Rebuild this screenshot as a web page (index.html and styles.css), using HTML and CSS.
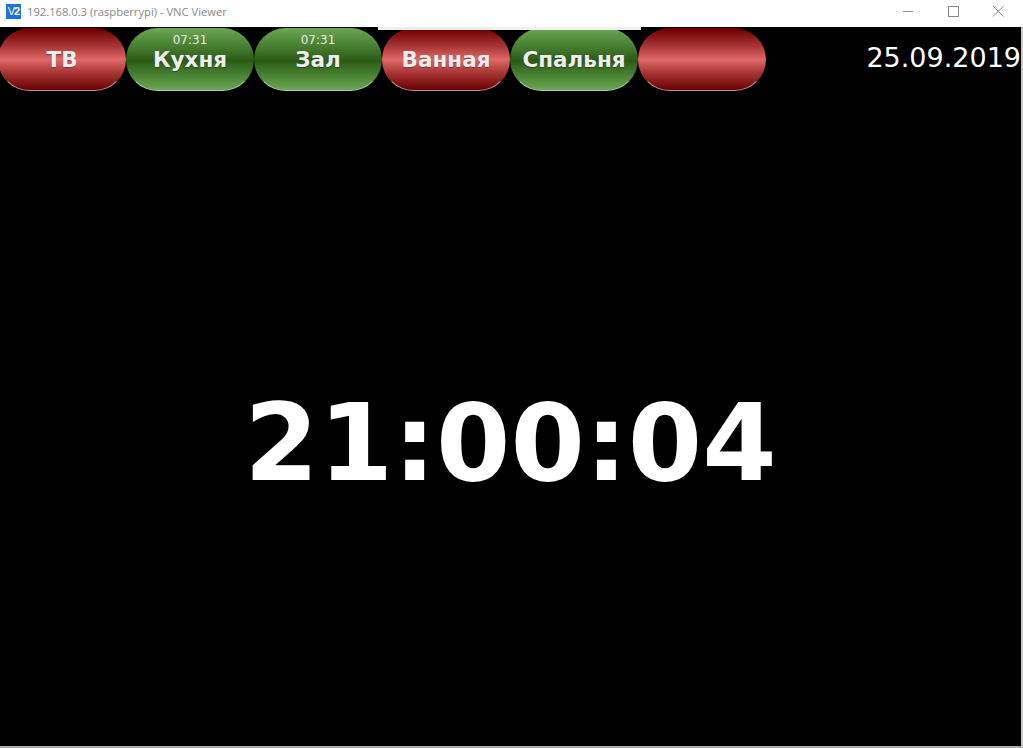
FILE: index.html
```html
<!DOCTYPE html>
<html lang="ru">
<head>
<meta charset="utf-8">
<title>VNC Viewer</title>
<link rel="stylesheet" href="styles.css">
</head>
<body>
<div class="window">
  <div class="titlebar">
    <div class="app-icon"><span class="v">V</span><span class="two">2</span></div>
    <div class="title">192.168.0.3 (raspberrypi) - VNC Viewer</div>
    <div class="controls">
      <svg class="ctl" width="46" height="27" viewBox="0 0 46 27"><path d="M18 11.5H28" stroke="#8c8c8c" stroke-width="1"/></svg>
      <svg class="ctl" width="46" height="27" viewBox="0 0 46 27"><rect x="18.5" y="6.5" width="10" height="10" fill="none" stroke="#8c8c8c" stroke-width="1"/></svg>
      <svg class="ctl" width="46" height="27" viewBox="0 0 46 27"><path d="M18 6L28.5 16.5M28.5 6L18 16.5" stroke="#8c8c8c" stroke-width="1"/></svg>
    </div>
  </div>
  <div class="screen">
    <div class="strip"></div>
    <div class="topbar">
      <div class="buttons">
        <div class="btn red"><div class="time"></div><div class="name">ТВ</div></div>
        <div class="btn green"><div class="time">07:31</div><div class="name">Кухня</div></div>
        <div class="btn green"><div class="time">07:31</div><div class="name">Зал</div></div>
        <div class="btn red"><div class="time"></div><div class="name">Ванная</div></div>
        <div class="btn green"><div class="time"></div><div class="name">Спальня</div></div>
        <div class="btn red"><div class="time"></div><div class="name"></div></div>
      </div>
      <div class="date">25.09.2019</div>
    </div>
    <div class="main">
      <div class="clock">21:00:04</div>
    </div>
  </div>
</div>
</body>
</html>
```
FILE: styles.css
```css
html, body {
  margin: 0;
  padding: 0;
  background: #ffffff;
}
body {
  width: 1023px;
  height: 748px;
  overflow: hidden;
  font-family: "DejaVu Sans", sans-serif;
}
.window {
  display: flex;
  flex-direction: column;
  width: 1023px;
  height: 748px;
}
.titlebar {
  height: 27px;
  flex: none;
  display: flex;
  align-items: flex-start;
  background: #ffffff;
}
.app-icon {
  width: 15px;
  height: 15px;
  margin: 4px 0 0 6px;
  background: #1e73d8;
  color: #ffffff;
  display: flex;
  align-items: center;
  justify-content: center;
  font-family: "Liberation Sans", sans-serif;
  font-size: 11px;
  line-height: 15px;
  letter-spacing: -1px;
}
.app-icon .two {
  font-weight: bold;
}
.title {
  margin: 4px 0 0 6px;
  font-family: "Open Sans", sans-serif;
  font-size: 11.2px;
  line-height: 15px;
  color: #8a8a8a;
}
.controls {
  margin-left: auto;
  display: flex;
  margin-right: 2px;
}
.ctl {
  display: block;
  margin-left: -1px;
}
.screen {
  position: relative;
  flex: 1;
  background: #000000;
  border-right: 2px solid #c8c8c8;
  border-bottom: 2px solid #a8a8a8;
  display: flex;
  flex-direction: column;
}
.strip {
  position: absolute;
  left: 378px;
  top: 0;
  width: 263px;
  height: 3px;
  background: #f0f0f0;
  z-index: 2;
}
.topbar {
  display: flex;
  align-items: flex-start;
  padding-top: 1px;
}
.buttons {
  display: flex;
  margin-left: -2px;
}
.btn {
  width: 128px;
  height: 63px;
  box-sizing: border-box;
  border-radius: 32px;
  border: 1px solid transparent;
  border-bottom-color: rgba(210, 210, 210, 0.7);
  display: flex;
  flex-direction: column;
  align-items: center;
  padding-top: 4px;
  color: #eeeeee;
}
.red {
  background: linear-gradient(#6e0000 0%, #a83434 28%, #e06868 50%, #a83434 72%, #6a0000 100%);
}
.green {
  background: linear-gradient(#6aa552 0%, #487f32 28%, #2b5a16 52%, #4a8334 76%, #6aa853 100%);
}
.time {
  height: 14px;
  font-size: 12px;
  line-height: 14px;
  color: #e8e8e8;
}
.name {
  margin-top: 0;
  height: 26px;
  font-size: 21.5px;
  font-weight: bold;
  line-height: 26px;
  text-shadow: 0 1px 1px rgba(0, 0, 0, 0.35);
}
.date {
  margin-left: auto;
  margin-right: 0;
  margin-top: 14px;
  font-size: 27px;
  line-height: 32px;
  color: #ffffff;
}
.main {
  flex: 1;
  display: flex;
  justify-content: center;
}
.clock {
  margin-top: 299px;
  font-size: 107px;
  font-weight: bold;
  line-height: 107px;
  color: #ffffff;
}
```
